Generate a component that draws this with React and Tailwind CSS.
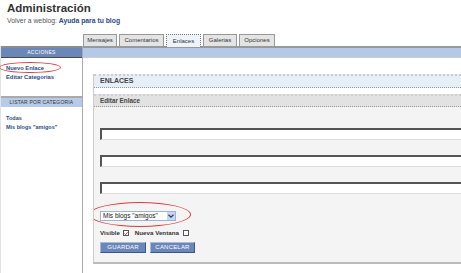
import React from 'react';

// Admin page: links editor ("Enlaces" tab)
const tabs = [
    { label: 'Mensajes', w: 'w-[34px]' },
    { label: 'Comentarios', w: 'w-[45px]' },
    { label: 'Enlaces', w: 'w-[35px]' },
    { label: 'Galerias', w: 'w-[34px]' },
    { label: 'Opciones', w: 'w-[36px]' },
];

const Field = () => (
    <div className="h-[12px] w-[400px] bg-white border-t-2 border-l-2 border-t-[#555] border-l-[#555] border-b border-r border-b-[#ddd] border-r-[#ddd]" />
);

export default function App() {
    return (
        <div className="w-[461px] h-[273px] bg-white overflow-hidden text-[#333] font-['Liberation_Sans',Arial,sans-serif]">
            {/* Header */}
            <div className="pl-[7px] h-[34px]">
                <h1 className="text-[11.5px] leading-[14px] pt-[1px] font-bold text-[#333]">Administración</h1>
                <p className="text-[6.8px] leading-[8px] mt-[2px] text-[#555]">
                    Volver a weblog: <a className="text-[#2a4b8d] font-bold">Ayuda para tu blog</a>
                </p>
            </div>

            <div className="flex">
                {/* Sidebar */}
                <aside className="w-[83px] shrink-0 h-[239px] flex flex-col">
                    <div className="h-[12px]" />
                    <div className="flex-1 border-r border-l border-r-[#aaa] border-l-[#e2e2e2]">
                        <div className="h-[12px] bg-[#6b87b9] border-t-2 border-b border-t-[#8c8c8c] border-b-[#4a4a4a] text-white text-[5px] flex items-center justify-center tracking-[0.3px]">
                            ACCIONES
                        </div>
                        <div className="relative pt-[6px] pl-[5px] text-[5.8px] leading-[9px] font-bold text-[#2a4b8d]">
                            <div>Nuevo Enlace</div>
                            <div>Editar Categorias</div>
                            <div className="absolute left-[-2px] top-[4px] w-[62px] h-[11px] rounded-[50%] border border-[#e03a3a]" />
                        </div>
                        <div className="mt-[14px] h-[11px] bg-[#b7cbe8] border-t-2 border-t-[#aaa] text-[#333] text-[5px] flex items-center justify-center tracking-[0.2px]">
                            LISTAR POR CATEGORIA
                        </div>
                        <div className="pt-[7px] pl-[5px] text-[5.5px] leading-[9px] font-bold text-[#2a4b8d]">
                            <div>Todas</div>
                            <div>Mis blogs "amigos"</div>
                        </div>
                    </div>
                </aside>

                {/* Main */}
                <main className="flex-1 min-w-0">
                    <div className="h-[12px] flex items-end gap-[2px]">
                        {tabs.map((t) =>
                            t.label === 'Enlaces' ? (
                                <div key={t.label} className={`${t.w} h-[13px] -mb-[1px] relative z-10 bg-[#eef3fa] border border-dotted border-[#777] border-b-0 text-[6px] text-[#333] flex items-center justify-center`}>
                                    {t.label}
                                </div>
                            ) : (
                                <div key={t.label} className={`${t.w} h-[12px] bg-[#e4e4e4] border border-[#999] border-b-0 text-[6px] text-[#333] flex items-center justify-center`}>
                                    {t.label}
                                </div>
                            )
                        )}
                    </div>
                    <div className="h-[12px] bg-[#b4c9e8] border-t-2 border-t-[#999] border-b border-b-[#ccc]" />

                    <div className="ml-[10px] mt-[16px] border-l border-l-[#ccc] border-b-2 border-b-[#bbb] overflow-hidden">
                        <div className="h-[14px] bg-[#e6eef8] border-t-2 border-t-[#ccc] border-b border-dotted border-b-[#999] pl-[6px] flex items-center text-[7px] font-bold text-[#444]">
                            ENLACES
                        </div>
                        <div className="h-[6px] bg-white" />
                        <div className="h-[13px] bg-[#e2e2e2] border-t-2 border-t-[#d0d0d0] border-b border-dotted border-b-[#999] pl-[6px] flex items-center text-[6.3px] font-bold text-[#444]">
                            Editar Enlace
                        </div>
                        <div className="bg-[#f4f4f4] pl-[6px] pt-[21px] h-[155px]">
                            <div className="flex flex-col gap-[15px]">
                                <Field />
                                <Field />
                                <Field />
                            </div>
                            <div className="relative mt-[17px] h-[10px] w-[76px]">
                                <div className="h-[10px] w-[76px] bg-white border border-[#9fb3d4] flex items-center text-[6.5px] text-[#222] pl-[2px] whitespace-nowrap">
                                    <span className="flex-1">Mis blogs "amigos"</span>
                                    <span className="w-[8px] h-[8px] bg-[#c6d5f0] flex items-center justify-center">
                                        <svg width="6" height="4" viewBox="0 0 6 4"><path d="M0.5 0.8 L3 3.2 L5.5 0.8" fill="none" stroke="#2c3f7a" strokeWidth="1.2" /></svg>
                                    </span>
                                </div>
                                <div className="absolute left-[-11px] top-[-9px] w-[102px] h-[25px] rounded-[50%] border border-[#e03a3a]" />
                            </div>
                            <div className="mt-[8px] flex items-center text-[6.2px] font-bold text-[#333] h-[8px] whitespace-nowrap">
                                <span>Visible</span>
                                <span className="ml-[3px] w-[6px] h-[6px] border border-[#555] bg-white flex items-center justify-center">
                                    <svg width="5" height="5" viewBox="0 0 5 5"><path d="M0.6 2.4 L2 4 L4.5 0.8" fill="none" stroke="#b22" strokeWidth="1" /></svg>
                                </span>
                                <span className="ml-[6px]">Nueva Ventana</span>
                                <span className="ml-[4px] w-[6px] h-[6px] border border-[#555] bg-white" />
                            </div>
                            <div className="mt-[5px] flex gap-[4px]">
                                <div className="h-[11px] w-[46px] bg-[#6b87b9] border border-[#3e5585] border-t-[#a9b9d8] border-l-[#a9b9d8] text-white text-[6px] flex items-center justify-center tracking-[0.2px]">GUARDAR</div>
                                <div className="h-[11px] w-[45px] bg-[#6b87b9] border border-[#3e5585] border-t-[#a9b9d8] border-l-[#a9b9d8] text-white text-[6px] flex items-center justify-center tracking-[0.2px]">CANCELAR</div>
                            </div>
                        </div>
                    </div>
                </main>
            </div>
        </div>
    );
}
